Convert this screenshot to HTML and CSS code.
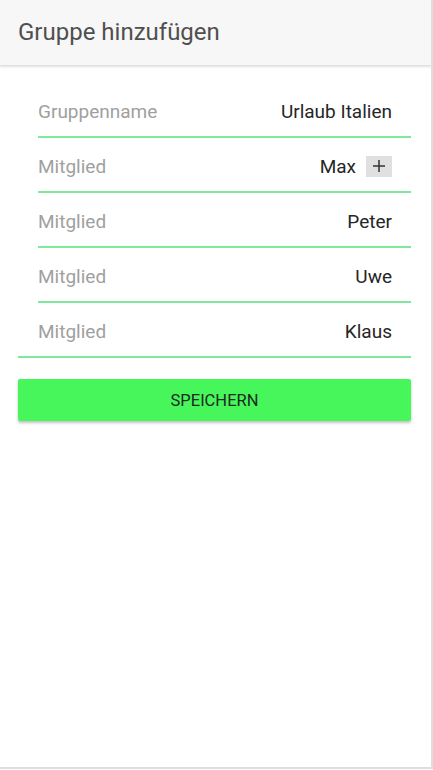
FILE: index.html
```html
<!DOCTYPE html>
<html lang="de">
<head>
<meta charset="utf-8">
<title>Gruppe hinzufügen</title>
<link rel="stylesheet" href="styles.css">
</head>
<body>
<div class="frame">
  <header class="header">
    <h1 class="title">Gruppe hinzufügen</h1>
  </header>
  <main class="content">
    <div class="form">
      <div class="row">
        <span class="label">Gruppenname</span>
        <span class="value">Urlaub Italien</span>
      </div>
      <div class="row">
        <span class="label">Mitglied</span>
        <span class="value">Max <span class="add"><svg width="14" height="14" viewBox="0 0 14 14"><path d="M7 1V13M1 7H13" stroke="#333" stroke-width="1.5" fill="none"/></svg></span></span>
      </div>
      <div class="row">
        <span class="label">Mitglied</span>
        <span class="value">Peter</span>
      </div>
      <div class="row">
        <span class="label">Mitglied</span>
        <span class="value">Uwe</span>
      </div>
      <div class="row row-last">
        <span class="label">Mitglied</span>
        <span class="value">Klaus</span>
      </div>
    </div>
    <button class="save">SPEICHERN</button>
  </main>
</div>
</body>
</html>
```
FILE: styles.css
```css
html, body {
  margin: 0;
  padding: 0;
  background: #ffffff;
}
body {
  font-family: Roboto, "Liberation Sans", sans-serif;
}
.frame {
  width: 431px;
  height: 767px;
  border-right: 2px solid #dddddd;
  border-bottom: 2px solid #dddddd;
  box-sizing: content-box;
  display: flex;
  flex-direction: column;
  overflow: hidden;
}
.header {
  height: 66px;
  flex-shrink: 0;
  background: #f7f7f7;
  border-bottom: 1px solid #e0e0e0;
  box-shadow: 0 1px 2px rgba(0,0,0,0.12);
  display: flex;
  align-items: center;
  padding-left: 18px;
  padding-bottom: 1px;
  box-sizing: border-box;
}
.title {
  margin: 0;
  font-weight: 400;
  font-size: 24px;
  color: #4f4f4f;
}
.content {
  padding: 17px 20px 0 18px;
  display: flex;
  flex-direction: column;
}
.form {
  display: flex;
  flex-direction: column;
}
.row {
  margin-left: 20px;
  height: 55px;
  box-sizing: border-box;
  border-bottom: 2px solid #7fe89c;
  display: flex;
  align-items: center;
  justify-content: space-between;
  padding-right: 19px;
  padding-top: 3px;
  font-size: 19px;
}
.row-last {
  margin-left: 0;
  padding-left: 20px;
}
.label {
  color: #a0a0a0;
}
.value {
  color: #262626;
  display: flex;
  align-items: center;
  gap: 10px;
}
.add {
  display: inline-flex;
  align-items: center;
  justify-content: center;
  width: 26px;
  height: 21px;
  background: #e0e0e0;
}
.save {
  margin-top: 21px;
  height: 42px;
  border: none;
  border-radius: 2px;
  background: #46f65b;
  color: #1b2a1d;
  font-family: Roboto, "Liberation Sans", sans-serif;
  font-size: 16.5px;
  box-shadow: 0 2px 3px rgba(0,0,0,0.25);
  padding: 0;
}
```
